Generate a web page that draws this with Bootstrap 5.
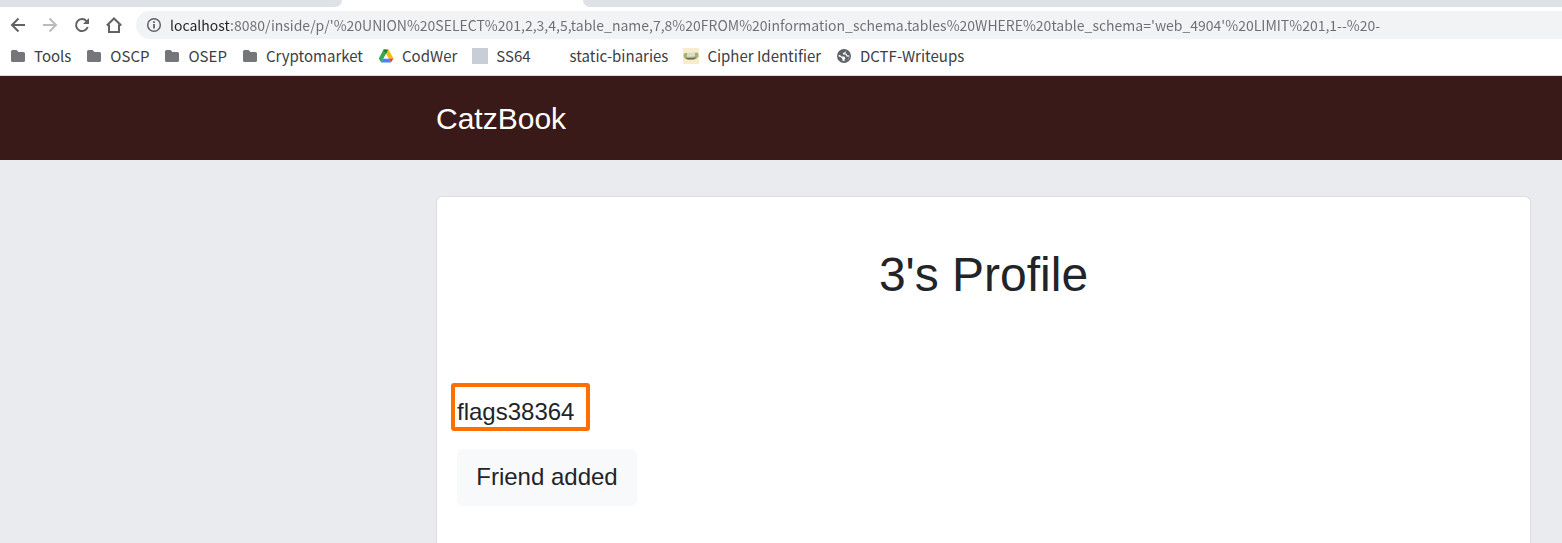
<!DOCTYPE html>
<html lang="en">
<head>
<meta charset="utf-8">
<meta name="viewport" content="width=device-width, initial-scale=1">
<title>CatzBook</title>
<link href="https://cdn.jsdelivr.net/npm/bootstrap@5.3.0/dist/css/bootstrap.min.css" rel="stylesheet">
<style>
  body { font-family: "Liberation Sans", Arial, sans-serif; background: #e9ebee; color: #212529; }
  .browser { font-family: "Noto Sans CJK SC", "Noto Sans", sans-serif; background: #fff; border-bottom: 1px solid #dadce0; }
  .strip { height: 7px; }
  .strip-left { width: 342px; background: #dee1e6; border-bottom-right-radius: 7px; }
  .strip-tab { width: 241px; }
  .strip-right { background: #dee1e6; border-bottom-left-radius: 7px; }
  .toolbar { padding: 4px 0 4px 10px; gap: 16px; }
  .tool { width: 16px; height: 16px; padding: 0; border: 0; background: none; color: #5f6368; line-height: 0; }
  .tool:disabled { color: #babcbe; }
  .address { height: 28px; margin-left: -2px; padding-left: 10px; gap: 8px; background: #f1f3f4; border-radius: 14px 0 0 14px; color: #5f6368; }
  .address input { border: 0; padding: 0; outline: 0; height: 28px; font-size: 14px; color: transparent; -webkit-text-fill-color: transparent;
    background: linear-gradient(90deg, #202124 60px, #6b6f74 60px); -webkit-background-clip: text; background-clip: text; }
  .bookmarks { padding: 2px 10px 8px; gap: 15px; }
  .bookmarks a { gap: 8px; font-size: 15px; line-height: 22px; color: #3c4043; }
  .icon { width: 16px; height: 16px; flex: none; }
  .tile { background: #c8ced5; }
  .indent { padding-left: 436px; }
  .site-bar { height: 84px; background: #3a1a18; }
  .site-name { font-size: 30px; line-height: 45px; color: #fff; }
  .content { padding-top: 36px; padding-right: 31px; }
  .profile { border: 1px solid #dcdde0; border-bottom: 0; border-radius: 6px 6px 0 0; padding: 49px 20px 0; }
  .profile h1 { font-size: 48px; line-height: 58px; font-weight: 400; margin: 0 0 79px; }
  .found { width: 139px; height: 48px; margin: 0 0 18px -6px; border: 4px solid #ff6f00; border-radius: 3px; padding: 7px 2px 0; font-size: 24px; line-height: 36px; }
  .friend { min-width: 180px; font-size: 24px; line-height: 36px; padding: 9px 18px 10px; border-radius: 6px; color: #212529; }
</style>
</head>
<body>
<div class="d-flex flex-column min-vh-100">
  <header class="browser">
    <div class="strip d-flex">
      <div class="strip-left"></div><div class="strip-tab"></div><div class="strip-right flex-grow-1"></div>
    </div>
    <div class="toolbar d-flex align-items-center">
      <button class="tool" type="button" aria-label="Back"><svg width="16" height="16" fill="none" stroke="currentColor" stroke-width="2"><path d="M15 8H2.500M8.500 1.500 2 8l6.500 6.500"/></svg></button>
      <button class="tool" type="button" aria-label="Forward" disabled><svg width="16" height="16" fill="none" stroke="currentColor" stroke-width="2"><path d="M1 8h12.500M7.500 1.500 14 8l-6.500 6.500"/></svg></button>
      <button class="tool" type="button" aria-label="Reload"><svg width="16" height="16" fill="none" stroke="currentColor" stroke-width="2"><path d="M13.700 10A6 6 0 1 1 12.500 4"/><path d="M15 1v6H9z" fill="currentColor" stroke="none"/></svg></button>
      <button class="tool" type="button" aria-label="Home"><svg width="16" height="16" fill="none" stroke="currentColor" stroke-width="2"><path d="M.8 8.500 8 1.500l7.200 7M3 7.500V15h10V7.500"/></svg></button>
      <div class="address d-flex align-items-center flex-grow-1">
        <svg class="icon" viewBox="0 0 16 16" fill="none" stroke="currentColor"><circle cx="8" cy="8" r="6.300" stroke-width="1.500"/><path d="M8 7v4.500M8 4.300v1.700" stroke-width="1.800"/></svg>
        <input class="flex-grow-1" type="text" aria-label="Address" value="localhost:8080/inside/p/'%20UNION%20SELECT%201,2,3,4,5,table_name,7,8%20FROM%20information_schema.tables%20WHERE%20table_schema='web_4904'%20LIMIT%201,1--%20-">
      </div>
    </div>
    <svg class="d-none"><symbol id="folder" viewBox="0 0 16 16"><path fill="#747679" d="M2.500 2H6.500l2 2h5Q15 4 15 5.500v7q0 1.500-1.500 1.500h-11Q1 14 1 12.500v-9Q1 2 2.500 2z"/></symbol></svg>
    <nav class="bookmarks d-flex align-items-center" aria-label="Bookmarks">
      <a class="d-flex align-items-center text-decoration-none" href="#"><svg class="icon"><use href="#folder"/></svg>Tools</a>
      <a class="d-flex align-items-center text-decoration-none" href="#"><svg class="icon"><use href="#folder"/></svg>OSCP</a>
      <a class="d-flex align-items-center text-decoration-none" href="#"><svg class="icon"><use href="#folder"/></svg>OSEP</a>
      <a class="d-flex align-items-center text-decoration-none" href="#"><svg class="icon"><use href="#folder"/></svg>Cryptomarket</a>
      <a class="d-flex align-items-center text-decoration-none" href="#"><svg class="icon" viewBox="0 0 16 16"><path fill="#34a853" d="M5.500 1.500H8L10 5 8 6 3.200 14.400.8 10.500z"/><path fill="#188038" d="M5.500 1.500h5L8 6z"/><path fill="#fbbc04" d="M10.500 1.500 15.500 10.500h-5L8 6z"/><path fill="#4285f4" d="M5.500 10.500h5l2.500 4H3z"/><path fill="#ea4335" d="M10.500 10.500h5L13 14.500z"/><path fill="#fff" d="M8 6l2.500 4.500h-5z"/></svg>CodWer</a>
      <a class="d-flex align-items-center text-decoration-none" href="#"><span class="icon tile"></span>SS64</a>
      <a class="d-flex align-items-center text-decoration-none" href="#"><span class="icon"></span>static-binaries</a>
      <a class="d-flex align-items-center text-decoration-none" href="#"><svg class="icon" viewBox="0 0 16 16"><path fill="#f7ecd0" d="M0 0h16v16H0z"/><path fill="#a9b077" d="M1.500 5q6 0 13-.5 1.500 1.500 1 4L13 11q-5 1-10.500 0Q0 9 .5 7z"/><path fill="#dcdecb" d="M4 5.300 12 5v3.500l-8 .5z"/><path fill="#6d7145" d="M2.500 9.700q5 1 10.500-.5l-1 1.700q-4 1-8 .3z"/></svg>Cipher Identifier</a>
      <a class="d-flex align-items-center text-decoration-none" href="#"><svg class="icon" viewBox="0 0 16 16"><circle cx="8" cy="8" r="7" fill="#5f6368"/><path fill="#fff" d="M9.500 2.800 9 4.300 7 5v1.500h2.500l1 2 2.700.2Q12.500 12.500 8.500 13.300V11.500L9.500 10 8 8.500H5.500L4 7H2.700L2.600 8.500l2.400.8 1.500 2v1.400L8.500 13.300Q14 12 13.300 7.500L11 7.200 10.500 5.500H8.800L9.800 4.500z"/></svg>DCTF-Writeups</a>
    </nav>
  </header>
  <div class="site-bar indent d-flex align-items-center">
    <a class="site-name text-decoration-none" href="#">CatzBook</a>
  </div>
  <main class="content indent d-flex flex-column flex-grow-1">
    <section class="profile bg-white flex-grow-1">
      <h1 class="text-center">3's Profile</h1>
      <p class="found">flags38364</p>
      <button class="btn btn-light friend" type="button">Friend added</button>
    </section>
  </main>
</div>
<script src="https://cdn.jsdelivr.net/npm/bootstrap@5.3.0/dist/js/bootstrap.bundle.min.js"></script>
</body>
</html>
